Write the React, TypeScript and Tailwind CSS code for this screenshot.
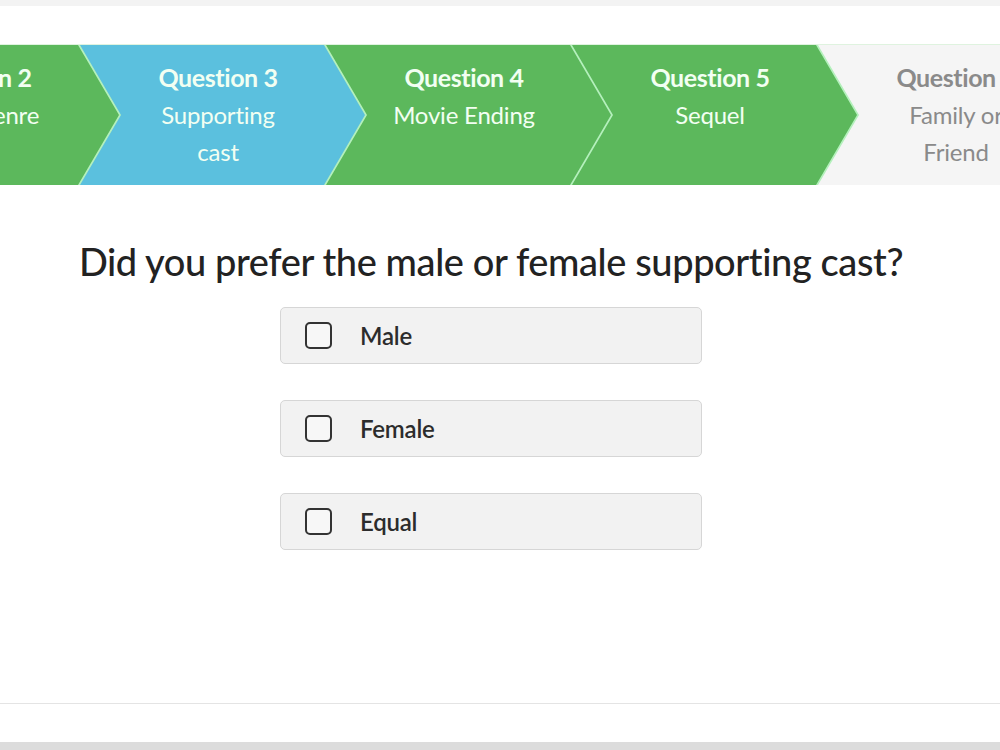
import React from "react";

type Step = {
  title: string;
  lines: string[];
  tone: "done" | "current" | "todo";
};

const steps: Step[] = [
  { title: "Question 2", lines: ["Movie Genre"], tone: "done" },
  { title: "Question 3", lines: ["Supporting", "cast"], tone: "current" },
  { title: "Question 4", lines: ["Movie Ending"], tone: "done" },
  { title: "Question 5", lines: ["Sequel"], tone: "done" },
  { title: "Question 6", lines: ["Family or", "Friend"], tone: "todo" },
];

const chevron =
  "polygon(0 0, 246px 0, 287px 50%, 246px 100%, 0 100%, 41px 50%)";
// point trimmed by 2px so the bar's light colour shows through as a divider
const chevronTrim =
  "polygon(0 0, 244px 0, 285px 50%, 244px 100%, 0 100%, 41px 50%)";

function StepArrow({ step, first }: { step: Step; first: boolean }) {
  const bg =
    step.tone === "current"
      ? "bg-[#5bc0de]"
      : step.tone === "done"
      ? "bg-[#5cb85c]"
      : "bg-[#f5f5f5]";
  const text = step.tone === "todo" ? "text-[#8a8a8a]" : "text-[#f2fff2]";
  return (
    <div
      className={`relative h-[140px] w-[287px] shrink-0 ${bg} ${first ? "" : "-ml-[41px]"} flex flex-col items-center pt-[13px] pl-[30px] pr-[41px] ${text}`}
      style={{ clipPath: step.tone === "todo" ? chevron : chevronTrim }}
    >
      <div className="text-[25px] font-bold leading-[38px] tracking-[-0.4px] whitespace-nowrap">
        {step.title}
      </div>
      {step.lines.map((l) => (
        <div key={l} className="text-[24px] leading-[37px] tracking-[-0.2px] whitespace-nowrap">
          {l}
        </div>
      ))}
    </div>
  );
}

function Option({ label }: { label: string }) {
  return (
    <label className="flex h-[57px] w-[422px] items-center rounded-[5px] border border-[#d6d6d6] bg-[#f2f2f2] pl-[24px]">
      <span className="h-[27px] w-[27px] rounded-[5px] border-2 border-[#333] bg-[#f7f7f7]" />
      <span className="ml-[28px] text-[24px] font-semibold tracking-[-0.2px] text-[#2c2c2c]">{label}</span>
    </label>
  );
}

export default function App() {
  return (
    <div
      className="flex h-[750px] w-[1000px] flex-col overflow-hidden bg-white"
      style={{ fontFamily: "Lato, 'Open Sans', sans-serif" }}
    >
      <div className="h-[6px] bg-[#f3f3f3]" />
      <div className="h-[38px]" />
      <div className="flex h-[141px] overflow-hidden border-t border-[#dff3df] bg-[#b4f0bc]">
        <div className="flex -ml-[166px]">
          {steps.map((s, i) => (
            <StepArrow key={s.title} step={s} first={i === 0} />
          ))}
          <div className="-ml-[41px] h-[140px] w-[300px] bg-[#f5f5f5]" />
        </div>
      </div>
      <h1 className="mt-[53px] text-center text-[38px] font-medium leading-[46px] tracking-[-0.4px] text-[#222] pr-[18px]">
        Did you prefer the male or female supporting cast?
      </h1>
      <div className="mt-[23px] flex flex-col items-start gap-[36px] pl-[280px]">
        <Option label="Male" />
        <Option label="Female" />
        <Option label="Equal" />
      </div>
      <div className="flex-1" />
      <div className="h-[39px] border-t border-[#e4e4e4]" />
      <div className="h-[8px] bg-[#dcdcdc]" />
    </div>
  );
}
